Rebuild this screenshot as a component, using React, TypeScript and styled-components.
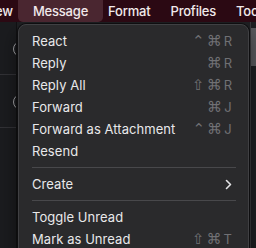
import React from "react";
import styled, { createGlobalStyle } from "styled-components";

const GlobalStyle = createGlobalStyle`
  html, body {
    margin: 0;
    padding: 0;
    width: 256px;
    height: 248px;
    overflow: hidden;
    background: #1c1d20;
  }
  #root {
    height: 100%;
  }
`;

type Item =
  | { kind: "item"; label: string; shortcut?: string[]; submenu?: boolean }
  | { kind: "sep" };

const items: Item[] = [
  { kind: "item", label: "React", shortcut: ["⌃", "⌘", "R"] },
  { kind: "item", label: "Reply", shortcut: ["⌘", "R"] },
  { kind: "item", label: "Reply All", shortcut: ["⇧", "⌘", "R"] },
  { kind: "item", label: "Forward", shortcut: ["⌘", "J"] },
  { kind: "item", label: "Forward as Attachment", shortcut: ["⌃", "⌘", "J"] },
  { kind: "item", label: "Resend" },
  { kind: "sep" },
  { kind: "item", label: "Create", submenu: true },
  { kind: "sep" },
  { kind: "item", label: "Toggle Unread" },
  { kind: "item", label: "Mark as Unread", shortcut: ["⇧", "⌘", "T"] },
  { kind: "item", label: "Mark as Read", shortcut: ["⇧", "⌘", "U"] },
];

const titles = ["View", "Message", "Format", "Profiles", "Tools"];

const Chevron = () => (
  <svg width="7" height="11" viewBox="0 0 7 11">
    <polyline
      points="1.5,1.5 5.5,5.5 1.5,9.5"
      fill="none"
      stroke="#e4e4e6"
      strokeWidth="1.6"
      strokeLinecap="round"
      strokeLinejoin="round"
    />
  </svg>
);

const App: React.FC = () => {
  return (
    <Page>
      <GlobalStyle />
      <MenuBar>
        {titles.map((t, i) => (
          <MenuTitle key={t} active={t === "Message"} first={i === 0}>
            {t}
          </MenuTitle>
        ))}
      </MenuBar>
      <Workspace>
        <Sidebar>
          <ListRow>
            <Avatar />
          </ListRow>
          <ListRow>
            <Avatar />
          </ListRow>
        </Sidebar>
        <Middle />
        <RightPane>
          <ScrollThumb />
        </RightPane>

        <Dropdown>
          {items.map((item, i) =>
            item.kind === "sep" ? (
              <Separator key={i} />
            ) : (
              <Row key={i}>
                <Label>{item.label}</Label>
                {item.shortcut && (
                  <Shortcut>
                    {item.shortcut.map((k, j) => (
                      <Key key={j} letter={/[A-Z]/.test(k)}>
                        {k}
                      </Key>
                    ))}
                  </Shortcut>
                )}
                {item.submenu && <Chevron />}
              </Row>
            )
          )}
        </Dropdown>
      </Workspace>
    </Page>
  );
};

export default App;

const Page = styled.div`
  display: flex;
  flex-direction: column;
  height: 100%;
  font-family: Inter, "Noto Sans", "DejaVu Sans", sans-serif;
`;

const MenuBar = styled.div`
  height: 22px;
  flex-shrink: 0;
  display: flex;
  align-items: stretch;
  background: #2b0913;
  white-space: nowrap;
  overflow: hidden;
`;

const MenuTitle = styled.div<{ active?: boolean; first?: boolean }>`
  display: flex;
  align-items: center;
  padding: ${({ active }) => (active ? "0 14.5px" : "0 10px")};
  margin: ${({ active, first }) =>
    active ? "0 -4.5px" : first ? "0 0 0 -27px" : "0"};
  border-radius: 0 0 5px 5px;
  background: ${({ active }) => (active ? "#4a2630" : "transparent")};
  color: #f1e9eb;
  font-size: 13px;
  font-weight: 500;
  letter-spacing: -0.2px;
`;

const Workspace = styled.div`
  position: relative;
  flex: 1;
  display: flex;
  overflow: hidden;
`;

const Sidebar = styled.div`
  width: 16px;
  flex-shrink: 0;
  background: #1b1c1f;
  border-right: 1px solid #111113;
  overflow: hidden;
`;

const ListRow = styled.div`
  height: 53px;
  padding-top: 19px;
  box-sizing: border-box;
  border-bottom: 1px solid #323236;
`;

const Avatar = styled.div`
  width: 16px;
  height: 16px;
  margin-left: 13px;
  border-radius: 50%;
  border: 1.5px solid #a4a4a8;
  box-sizing: border-box;
`;

const Middle = styled.div`
  flex: 1;
  background: #1f2023;
`;

const RightPane = styled.div`
  width: 5px;
  flex-shrink: 0;
  background: #1e1f22;
  border-left: 1px solid #3a3a3d;
  padding-top: 6px;
`;

const ScrollThumb = styled.div`
  height: 38px;
  background: #5a5a5e;
`;

const Dropdown = styled.div`
  position: absolute;
  left: 18px;
  top: 2px;
  width: 231px;
  box-sizing: border-box;
  padding: 5px 0;
  background: #2a2a2c;
  border: 1px solid #404043;
  border-radius: 8px;
  box-shadow: 0 0 0 1px #0e0e10, 0 8px 20px rgba(0, 0, 0, 0.5);
`;

const Row = styled.div`
  height: 22px;
  display: flex;
  align-items: center;
  padding: 0 16px 0 13px;
`;

const Label = styled.span`
  flex: 1;
  color: #e8e8ea;
  font-size: 13px;
  letter-spacing: 0.05px;
`;

const Shortcut = styled.span`
  display: flex;
  align-items: center;
  gap: 2px;
  color: #707074;
`;

const Key = styled.span<{ letter?: boolean }>`
  display: inline-block;
  min-width: ${({ letter }) => (letter ? "8px" : "10px")};
  text-align: center;
  font-size: ${({ letter }) => (letter ? "13px" : "15px")};
  font-family: ${({ letter }) =>
    letter ? "Inter, sans-serif" : `"DejaVu Sans", sans-serif`};
  line-height: 1;
`;

const Separator = styled.div`
  height: 1px;
  margin: 5px 12px 5px 13px;
  background: #48484b;
`;
